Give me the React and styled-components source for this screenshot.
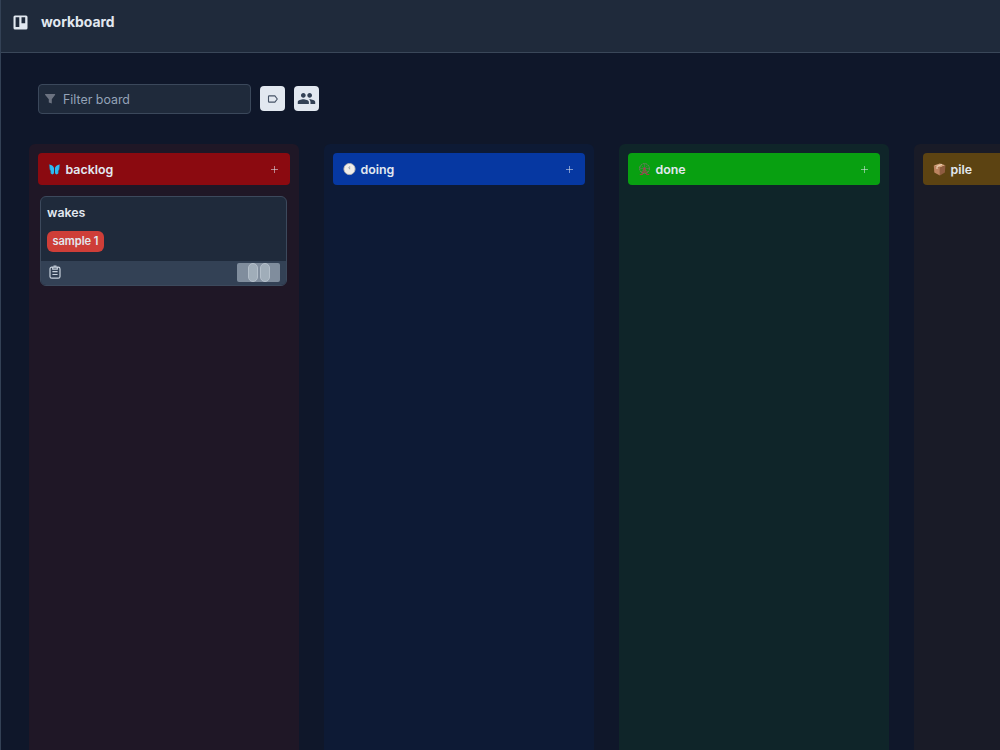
import React from 'react';
import styled, { createGlobalStyle, ThemeProvider } from 'styled-components';
import { MdGroup } from 'react-icons/md';

const theme = {
    colors: {
        page: '#0f172a',
        surface: '#1f2a3b',
        line: '#334155',
        text: '#e2e8f0',
        muted: '#94a3b8',
    }
};

const GlobalStyle = createGlobalStyle`
    * { box-sizing: border-box; }
    body {
        margin: 0;
        overflow: hidden;
        background: #0f172a;
        font-family: Inter, "Liberation Sans", sans-serif;
    }
`;

const Page = styled.div`
    display: flex;
    flex-direction: column;
    height: 100vh;
    overflow: hidden;
    border-left: 1px solid ${ ({ theme: { colors } }) => colors.line };
    background: ${ ({ theme: { colors } }) => colors.page };
    color: ${ ({ theme: { colors } }) => colors.text };
`;

const TopBar = styled.header`
    display: flex;
    align-items: center;
    flex-shrink: 0;
    gap: 13px;
    height: 53px;
    padding: 0 12px 8px;
    background: ${ ({ theme: { colors } }) => colors.surface };
    border-bottom: 1px solid #3a4759;
`;

const Title = styled.h1`
    margin: 0;
    font-size: 13.9px;
    line-height: 20px;
    font-weight: 700;
`;

const Toolbar = styled.div`
    display: flex;
    align-items: center;
    flex-shrink: 0;
    gap: 9px;
    padding: 31px 37px 30px;
`;

const SearchBox = styled.label`
    display: flex;
    align-items: center;
    gap: 7px;
    width: 213px;
    height: 30px;
    padding: 0 5px;
    border: 1px solid #3b485b;
    border-radius: 4px;
    background: ${ ({ theme: { colors } }) => colors.surface };
`;

const SearchInput = styled.input`
    flex: 1;
    min-width: 0;
    padding: 0;
    border: 0;
    outline: 0;
    background: transparent;
    color: inherit;
    font: 400 12.4px Inter, sans-serif;
    &::placeholder {
        color: ${ ({ theme: { colors } }) => colors.muted };
        opacity: 1;
    }
`;

const ToolButton = styled.button`
    display: flex;
    align-items: center;
    justify-content: center;
    width: 25px;
    height: 25px;
    margin-bottom: 1px;
    padding: 0;
    border: 0;
    border-radius: 4px;
    background: #e2e8f0;
    color: #334155;
`;

const Board = styled.main`
    display: flex;
    flex: 1;
    gap: 25px;
    padding-left: 28px;
`;

const Column = styled.section`
    flex: 0 0 270px;
    padding: 9px;
    border-radius: 6px 6px 0 0;
    background: ${ props => props.$tint };
`;

const ColumnHeader = styled.div`
    display: flex;
    align-items: center;
    width: 251.5px;
    height: 31.5px;
    padding: 1px 9px 0 10px;
    border-radius: 4px;
    background: ${ props => props.$color };
`;

const ColumnName = styled.h2`
    flex: 1;
    margin: 0 0 0 4.5px;
    padding-top: 1px;
    font-size: 12.4px;
    line-height: 18px;
    font-weight: 600;
`;

const Card = styled.article`
    margin: 11.5px 2px 0;
    width: 247px;
    overflow: hidden;
    border: 1px solid #3c495c;
    border-radius: 6px;
    background: ${ ({ theme: { colors } }) => colors.surface };
`;

const CardBody = styled.div`
    height: 63.5px;
    padding: 7px 6px;
`;

const CardTitle = styled.h3`
    margin: 0 0 9px;
    font-size: 12.4px;
    line-height: 18px;
    font-weight: 600;
`;

const Tag = styled.span`
    display: block;
    width: fit-content;
    height: 21px;
    padding: 0 5.5px;
    border-radius: 6px;
    background: #ce3e38;
    font-size: 11.1px;
    line-height: 21px;
    font-weight: 600;
    letter-spacing: -.05px;
`;

const CardFooter = styled.div`
    display: flex;
    align-items: center;
    justify-content: space-between;
    height: 24.5px;
    padding: 0 6px 1px 7px;
    background: #334155;
`;

const Members = styled.div`
    display: flex;
    justify-content: center;
    gap: 2px;
    width: 43px;
    height: 19px;
    border-radius: 2px;
    background: #808d9d;
`;

const Member = styled.span`
    width: 10px;
    height: 19px;
    border: 1px solid #b4bfca;
    border-radius: 5px;
    background: #a0adb9;
`;

const BoardIcon = () => (
    <svg width="15" height="15" viewBox="0 0 15 15">
        <path fill="#e2e8f0" fillRule="evenodd" d="M2 .5h11A1.5 1.5 0 0 1 14.5 2v11A1.5 1.5 0 0 1 13 14.5H2A1.5 1.5 0 0 1 .5 13V2A1.5 1.5 0 0 1 2 .5ZM2.6 2.200v9.900h3.700V2.200ZM8.500 2.200v6h3.700v-6Z" />
    </svg>
);

const FunnelIcon = () => (
    <svg width="12" height="12" viewBox="0 0 12 12">
        <path fill="#6b7280" d="M1.6 1h9a.5.5 0 0 1 .4.9L7.800 6.300v4.300L4.800 9.400V6.300L1.200 1.900A.5.5 0 0 1 1.600 1Z" />
    </svg>
);

const LabelIcon = () => (
    <svg width="12" height="12" viewBox="0 0 12 12">
        <path fill="none" stroke="#465366" strokeWidth="1.1" strokeLinejoin="round" d="M2.200 2.900h5.700L10.300 6 7.900 9.100H2.200Q1.500 9.100 1.500 8.400V3.600Q1.500 2.900 2.200 2.900Z" />
    </svg>
);

const ClipboardIcon = () => (
    <svg width="14" height="14" viewBox="0 0 14 14" fill="none" stroke="#c9d2de" strokeWidth="1.200">
        <rect x="2" y="2.200" width="10" height="11" rx="1.800" />
        <path d="M4.700 2v2.200h4.600V2M5.500 1.200h3M4.400 6.700h5.200M4.400 9.500h5.200" />
    </svg>
);

const PlusIcon = () => (
    <svg width="13" height="13" viewBox="0 0 13 13">
        <path d="M6.500 3v7M3 6.500h7" stroke="#e2e8f0" strokeOpacity=".55" />
    </svg>
);

const ButterflyIcon = () => (
    <svg width="13" height="13" viewBox="0 0 13 13">
        <path fill="#2cbcf4" d="M1.200 1.400C3.900 1.500 5.700 3.300 6.200 5.600L5.900 10.600 4.300 11.600 2.600 10.200 2.700 8 1.800 6.500ZM11.800 1.400C9.100 1.500 7.300 3.300 6.800 5.600L7.100 10.600 8.700 11.600 10.400 10.200 10.300 8 11.200 6.500Z" />
        <path d="M1.200 1.400 2 6.500 3 9.800M11.800 1.400 11 6.500 10 9.800" fill="none" stroke="#235b86" strokeWidth=".4" />
        <path d="M6.500 5v4.500" stroke="#432438" strokeWidth=".8" />
    </svg>
);

const ClockIcon = () => (
    <svg width="13" height="13" viewBox="0 0 13 13">
        <circle cx="6.500" cy="6" r="5.600" fill="#f1eee9" stroke="#bbb7b3" strokeWidth=".9" />
        <path d="M6.700 6.200V3M6.700 6.200 5.500 4" stroke="#909398" strokeWidth=".6" />
    </svg>
);

const WheelIcon = () => (
    <svg width="13" height="13" viewBox="0 0 13 13" fill="none">
        <circle cx="6.500" cy="5.500" r="4.900" stroke="#80736f" strokeWidth="1" strokeDasharray="2 .6" />
        <path d="M6.500 1v9M2 5.500h9M3.300 2.500l6.400 6.400M9.700 2.500 3.300 8.900" stroke="#75736c" strokeWidth=".5" />
        <path d="m6.500 5-2.700 6.500M6.500 5l2.700 6.500" stroke="#a4444b" strokeWidth=".9" />
        <path d="M1.800 11.500h3M8.200 11.500h3M5 9.200h3" stroke="#9d4147" strokeWidth="1.200" />
        <circle cx="6.500" cy="5.500" r="1" fill="#b43455" />
    </svg>
);

const BoxIcon = () => (
    <svg width="13" height="13" viewBox="0 0 13 13">
        <path fill="#d3a17a" d="m.8 2.500 6-2 5.600 1.800-5.500 2.500Z" />
        <path fill="#bd8460" d="m.8 2.500 6.100 2.300v7.600L1.300 9.500Z" />
        <path fill="#8e5c40" d="m6.900 4.800 5.500-2.500-.5 7.200-5 2.900Z" />
        <path d="m9 1.300-5 2.300v2.300" fill="none" stroke="#ead0b5" strokeWidth="1.100" />
    </svg>
);

const columns = [
    {
        name: 'backlog',
        color: '#8b0a10',
        tint: '#1f1726',
        icon: <ButterflyIcon />,
        cards: [{ title: 'wakes', tag: 'sample 1' }],
    },
    { name: 'doing', color: '#0638a2', tint: '#0d1a35', icon: <ClockIcon />, cards: [] },
    { name: 'done', color: '#08a011', tint: '#0f2529', icon: <WheelIcon />, cards: [] },
    { name: 'pile', color: '#5c4312', tint: '#191b27', icon: <BoxIcon />, cards: [] },
];

const App = () => {
    return (
        <ThemeProvider theme={theme}>
            <GlobalStyle />
            <Page>
                <TopBar>
                    <BoardIcon />
                    <Title>workboard</Title>
                </TopBar>
                <Toolbar>
                    <SearchBox>
                        <FunnelIcon />
                        <SearchInput placeholder="Filter board" />
                    </SearchBox>
                    <ToolButton aria-label="Labels"><LabelIcon /></ToolButton>
                    <ToolButton aria-label="Members"><MdGroup size={19} /></ToolButton>
                </Toolbar>
                <Board>
                    {columns.map(({ name, color, tint, icon, cards }) => (
                        <Column key={name} $tint={tint}>
                            <ColumnHeader $color={color}>
                                {icon}
                                <ColumnName>{name}</ColumnName>
                                <PlusIcon />
                            </ColumnHeader>
                            {cards.map(card => (
                                <Card key={card.title}>
                                    <CardBody>
                                        <CardTitle>{card.title}</CardTitle>
                                        <Tag>{card.tag}</Tag>
                                    </CardBody>
                                    <CardFooter>
                                        <ClipboardIcon />
                                        <Members>
                                            <Member />
                                            <Member />
                                        </Members>
                                    </CardFooter>
                                </Card>
                            ))}
                        </Column>
                    ))}
                </Board>
            </Page>
        </ThemeProvider>
    )
}

export default App;
